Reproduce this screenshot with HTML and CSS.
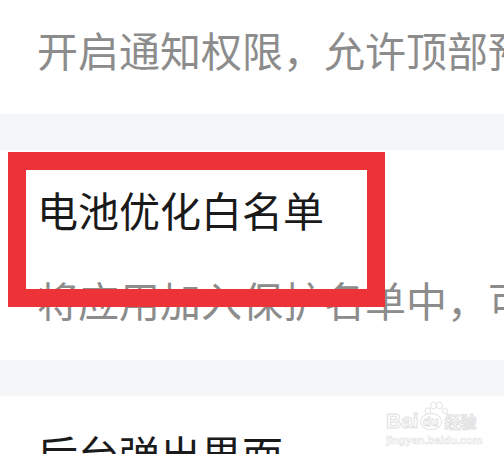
FILE: index.html
```html
<!DOCTYPE html>
<html lang="zh-CN">
<head>
    <meta charset="UTF-8">
    <meta name="viewport" content="width=device-width, initial-scale=1.0">
    <title>电池优化白名单</title>
    <link rel="stylesheet" href="styles.css">
</head>
<body>
    <div class="page">
        <div class="item item-top">
            <div class="desc">开启通知权限，允许顶部预览通知</div>
        </div>
        <div class="gap"></div>
        <div class="item item-mid">
            <div class="title">电池优化白名单</div>
            <div class="desc desc-mid">将应用加入保护名单中，可防止被清理</div>
        </div>
        <div class="gap"></div>
        <div class="item item-bottom">
            <div class="title">后台弹出界面</div>
        </div>

        <!-- annotation box -->
        <div class="mark"></div>

        <div class="watermark">
            <svg class="wm-paw" width="24" height="14" viewBox="0 0 24 14">
                <g fill="#fff" stroke="#e3e3e3" stroke-width="1">
                    <ellipse cx="4" cy="10" rx="2.8" ry="3.2"/>
                    <ellipse cx="9.5" cy="4.5" rx="2.8" ry="3.5"/>
                    <ellipse cx="15.5" cy="4.5" rx="2.8" ry="3.5"/>
                    <ellipse cx="21" cy="10" rx="2.4" ry="3"/>
                </g>
            </svg>
            <div class="wm-logo">
                <span class="wm-bai">Bai</span>
                <span class="wm-du">du</span>
                <span class="wm-cn">经验</span>
            </div>
            <div class="wm-url">jingyan.baidu.com</div>
        </div>
    </div>
</body>
</html>
```

FILE: styles.css
```css
body {
    margin: 0;
    background: #fff;
    font-family: "Noto Sans CJK SC", "Noto Sans", sans-serif;
}

.page {
    position: relative;
    width: 504px;
    height: 454px;
    overflow: hidden;
}

.item {
    background: #fff;
    padding-left: 37px;
}

.item-top {
    padding-top: 29px;
    height: 85px;
}

.item-mid {
    padding-top: 39px;
    height: 171px;
}

.item-bottom {
    padding-top: 37px;
    height: 60px;
}

.gap {
    height: 36px;
    background: #f5f6f8;
}

.title,
.desc {
    font-size: 41px;
    line-height: 41px;
    white-space: nowrap;
}

.title {
    color: #1a1a1a;
}

.desc {
    color: #8c8c8c;
}

.desc-mid {
    margin-top: 49px;
}

.mark {
    position: absolute;
    left: 8px;
    top: 152px;
    width: 341px;
    height: 119px;
    border: 18px solid #ee3338;
}

.watermark {
    position: absolute;
    left: 386px;
    top: 401px;
    white-space: nowrap;
    font-family: "Liberation Sans", Arial, sans-serif;
}

.wm-paw {
    position: absolute;
    left: 38px;
    top: 0;
}

.wm-logo {
    display: flex;
    align-items: center;
    margin-top: 9px;
}

.wm-bai,
.wm-cn {
    font-size: 21px;
    font-weight: bold;
    color: #fff;
    -webkit-text-stroke: 1px #e0e0e0;
    line-height: 22px;
}

.wm-du {
    font-size: 13px;
    font-weight: bold;
    color: #fff;
    -webkit-text-stroke: 0.8px #e0e0e0;
    border: 1px solid #e3e3e3;
    border-radius: 50% 50% 45% 45%;
    padding: 0 2px;
    line-height: 15px;
    margin-left: 1px;
}

.wm-cn {
    font-family: "Noto Sans CJK SC", sans-serif;
    font-size: 16px;
    margin-left: 3px;
}

.wm-url {
    font-size: 11px;
    font-weight: bold;
    color: #fff;
    -webkit-text-stroke: 0.6px #e3e3e3;
    margin-top: 2px;
}
```
